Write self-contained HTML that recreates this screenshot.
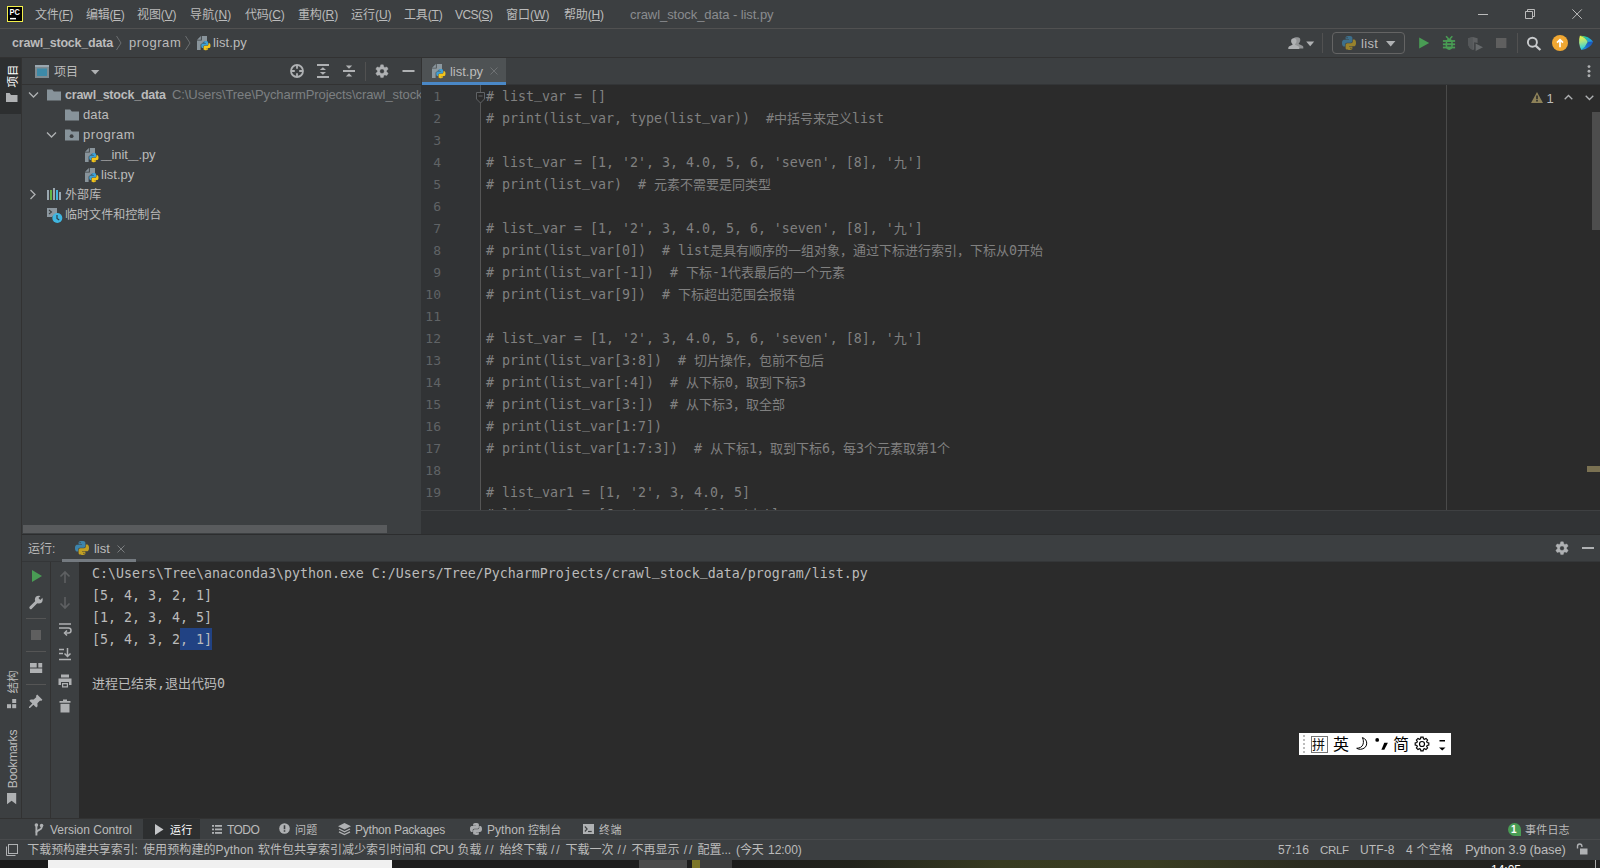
<!DOCTYPE html>
<html lang="zh-CN">
<head>
<meta charset="utf-8">
<title>crawl_stock_data - list.py</title>
<style>
html,body{margin:0;padding:0;}
body{width:1600px;height:868px;overflow:hidden;background:#3c3f41;position:relative;
 font-family:"Liberation Sans","Noto Sans CJK SC",sans-serif;font-size:12px;color:#bbbbbb;}
.a{position:absolute;}
.t{position:absolute;white-space:nowrap;line-height:20px;height:20px;}
.mono{font-family:"DejaVu Sans Mono","Liberation Mono","Noto Sans CJK SC",monospace;font-size:13.29px;}
svg{position:absolute;overflow:visible;}
.hl{position:absolute;height:1px;}
.vl{position:absolute;width:1px;}
u{text-decoration:underline;text-underline-offset:1px;}
/* editor */
#ed{left:422px;top:85px;width:1178px;height:425px;background:#2b2b2b;overflow:hidden;}
#gut{left:0;top:0;width:59px;height:425px;background:#313335;}
.ln{margin-top:1px;position:absolute;left:-1px;width:20px;text-align:right;color:#606366;height:22px;line-height:22px;font-size:13px;}
.cl{margin-top:1px;position:absolute;left:64px;color:#808080;height:22px;line-height:22px;white-space:pre;}
.cj{font-size:13px;}
.u_{position:relative;top:-3px;}
.L{font-size:13px;}
.bt{font-size:11px;}
.bt.L{font-size:12px;}
/*FIT*/
#m1{letter-spacing:-0.269px;}
#m2{letter-spacing:-0.303px;}
#m3{letter-spacing:-0.103px;}
#m4{letter-spacing:0.166px;}
#m5{letter-spacing:-0.234px;}
#m6{letter-spacing:-0.134px;}
#m7{letter-spacing:-0.034px;}
#m8{letter-spacing:-0.169px;}
#m9{letter-spacing:-0.531px;}
#m10{letter-spacing:0.034px;}
#m11{letter-spacing:-0.174px;}
#wt{letter-spacing:-0.067px;}
#n1{letter-spacing:-0.202px;}
#n2{letter-spacing:0.554px;}
#n3{letter-spacing:0.081px;}
#t1{letter-spacing:-0.215px;}
#t2{letter-spacing:0.122px;}
#t3{letter-spacing:0.540px;}
#t5{letter-spacing:0.024px;}
#t6{letter-spacing:0.095px;}
#t7{letter-spacing:0.061px;}
#tab1{letter-spacing:-0.019px;}
#r0{letter-spacing:0.052px;}
#r1{letter-spacing:-0.023px;}
#rc{letter-spacing:0.327px;}
#b1{letter-spacing:-0.016px;}
#b2{letter-spacing:0.250px;}
#b3{letter-spacing:-0.563px;}
#b4{letter-spacing:0.200px;}
#b5{letter-spacing:-0.227px;}
#b6{letter-spacing:0.050px;}
#b7{letter-spacing:0.400px;}
#b8{letter-spacing:0.200px;}
#sa{letter-spacing:-0.084px;}
#sb{letter-spacing:0.094px;}
#sc{letter-spacing:-0.001px;}
#sd{letter-spacing:-0.681px;}
#sf1{letter-spacing:1.914px;}
#sf2{letter-spacing:1.914px;}
#sf3{letter-spacing:1.914px;}
#sf4{letter-spacing:1.914px;}
#sm{letter-spacing:-0.103px;}
#sn{letter-spacing:-0.067px;}
#so{letter-spacing:-0.039px;}
#s1{letter-spacing:0.194px;}
#s2{letter-spacing:-0.308px;}
#s3{letter-spacing:0.120px;}
#s4{letter-spacing:0.237px;}
#s5{letter-spacing:-0.107px;}
/*ENDFIT*/
/* console */
#con{left:79px;top:562px;width:1521px;height:256px;background:#2b2b2b;overflow:hidden;}
.ol{margin-top:1px;position:absolute;left:13px;color:#bbbbbb;height:22px;line-height:22px;white-space:pre;}
</style>
</head>
<body>
<svg width="0" height="0" style="left:0;top:0"><defs>
<g id="pylogo"><path d="M4.95 0C2.4 0 2.6 1.1 2.6 1.1V2.25H5V2.6H1.65S0 2.4 0 5c0 2.6 1.42 2.5 1.42 2.5h.85V6.3s-.05-1.42 1.4-1.42h2.4s1.35.02 1.35-1.3V1.38S7.63 0 4.95 0zM3.62.77a.43.43 0 1 1 0 .87.43.43 0 0 1 0-.87z" fill="#3e9fd4"/><path d="M5.05 10c2.55 0 2.35-1.1 2.35-1.1V7.75H5V7.4h3.35S10 7.6 10 5c0-2.6-1.42-2.5-1.42-2.5h-.85v1.2s.05 1.42-1.4 1.42h-2.4s-1.35-.02-1.35 1.3v2.2S2.37 10 5.05 10zm1.33-.77a.43.43 0 1 1 0-.87.43.43 0 0 1 0 .87z" fill="#f4c51a"/></g>
<g id="pyfile"><path d="M5.800 1H11v5.600H8.200L4.600 9.400V15H1V5.600H5.800z" fill="#9aa7b0" fill-opacity=".82"/><path d="M4.900 1.100V4.700H1.100z" fill="#9aa7b0" fill-opacity=".82"/><g transform="translate(5.200,6) scale(.93)"><use href="#pylogo"/></g></g>
<g id="folder"><path d="M1 2.5h5.2l1.6 2H15V13.5H1z" fill="#87939a"/></g>
<g id="chevd"><path d="M1 1.5L5.5 6L10 1.5" fill="none" stroke="#afb1b3" stroke-width="1.3"/></g>
<g id="chevr"><path d="M1.5 1L6 5.5L1.5 10" fill="none" stroke="#afb1b3" stroke-width="1.3"/></g>
<g id="gear"><path fill="#afb1b3" fill-rule="evenodd" stroke="#afb1b3" stroke-width=".4" stroke-linejoin="round" d="M8.87 3.00L8.24 0.82L5.76 0.82L5.13 3.00L4.30 3.48L2.09 2.94L0.85 5.08L2.43 6.72L2.43 7.68L0.85 9.32L2.09 11.46L4.30 10.92L5.13 11.40L5.76 13.58L8.24 13.58L8.87 11.40L9.70 10.92L11.91 11.46L13.15 9.32L11.57 7.68L11.57 6.72L13.15 5.08L11.91 2.94L9.70 3.48zM4.70 7.20a2.30 2.30 0 1 0 4.60 0a2.30 2.30 0 1 0 -4.60 0z"/></g>
</defs></svg>
<!-- TITLEBAR -->
<div class="a" id="tb" style="left:0;top:0;width:1600px;height:28px;background:#3c3f41;"></div>
<div class="hl" style="left:0;top:28px;width:1600px;background:#515151;"></div>
<svg style="left:7px;top:6px" width="16" height="16" viewBox="0 0 16 16"><rect x="0" y="0" width="16" height="16" fill="#f3f04a"/><rect x="1" y="1" width="14" height="14" fill="#000"/><text x="2.6" y="8.8" font-family="Liberation Sans,sans-serif" font-weight="bold" font-size="8.2" fill="#fff" textLength="10.4" lengthAdjust="spacingAndGlyphs">PC</text><rect x="3" y="11.9" width="6" height="1.5" fill="#fff"/></svg>
<div class="t m" id="m1" style="left:35px;top:5px;">文件(<u>F</u>)</div>
<div class="t m" id="m2" style="left:86px;top:5px;">编辑(<u>E</u>)</div>
<div class="t m" id="m3" style="left:137px;top:5px;">视图(<u>V</u>)</div>
<div class="t m" id="m4" style="left:190px;top:5px;">导航(<u>N</u>)</div>
<div class="t m" id="m5" style="left:245px;top:5px;">代码(<u>C</u>)</div>
<div class="t m" id="m6" style="left:298px;top:5px;">重构(<u>R</u>)</div>
<div class="t m" id="m7" style="left:351px;top:5px;">运行(<u>U</u>)</div>
<div class="t m" id="m8" style="left:404px;top:5px;">工具(<u>T</u>)</div>
<div class="t m" id="m9" style="left:455px;top:5px;">VCS(<u>S</u>)</div>
<div class="t m" id="m10" style="left:506px;top:5px;">窗口(<u>W</u>)</div>
<div class="t m" id="m11" style="left:564px;top:5px;">帮助(<u>H</u>)</div>
<div class="t L" id="wt" style="left:630px;top:5px;color:#8a8c8f;">crawl_stock_data - list.py</div>
<svg style="left:1470px;top:6px" width="124" height="18" viewBox="0 0 124 18"><g fill="none" stroke="#bbbbbb" stroke-width="1"><path d="M8 8.5H18"/><path d="M55.500 5.500h7v7h-7z"/><path d="M57.500 5.500v-2h7v7h-2"/><path d="M102.400 3.400l9.400 9.400M111.800 3.400l-9.400 9.400"/></g></svg>
<!-- NAVBAR -->
<div class="hl" style="left:0;top:57px;width:1600px;background:#323232;"></div>
<div class="t" id="n1" style="font-size:12.5px;left:12px;top:33px;font-weight:bold;">crawl_stock_data</div>
<svg style="left:115px;top:35px" width="8" height="16" viewBox="0 0 8 16"><path d="M1.5 1L6 8L1.5 15" fill="none" stroke="#6b6e70" stroke-width="1"/></svg>
<div class="t L" id="n2" style="left:129px;top:33px;">program</div>
<svg style="left:184px;top:35px" width="8" height="16" viewBox="0 0 8 16"><path d="M1.5 1L6 8L1.5 15" fill="none" stroke="#6b6e70" stroke-width="1"/></svg>
<svg class="pyf" style="left:196px;top:35px" width="16" height="16" viewBox="0 0 16 16"><use href="#pyfile"/></svg>
<div class="t L" id="n3" style="left:213px;top:33px;">list.py</div>
<!-- TOOLBAR -->
<svg style="left:1288px;top:36px" width="28" height="14" viewBox="0 0 28 14"><g fill="#afb1b3"><path d="M9.500 1.200a2.800 2.800 0 0 1 2.800 2.800c0 1.300-.7 2.600-1.500 3.200v.9l3.600 1.600c.6.300.9.800.9 1.400v1.400H6.500l.0-2c0-.9-.5-1.700-1.300-2.100L4.600 8.100l1.800-.8V6.800C5.700 6.200 5.200 5.200 5.200 4A2.800 2.800 0 0 1 8 1.200z" opacity=".75"/><path d="M5.800 2.200a2.700 2.700 0 0 1 2.700 2.700c0 1.300-.6 2.400-1.400 3v.9l3.200 1.500c.6.300 1 .9 1 1.500V13H.3v-1.200c0-.6.400-1.200 1-1.500l3.200-1.500v-.9c-.8-.6-1.400-1.700-1.400-3a2.700 2.700 0 0 1 2.700-2.700z"/><path d="M18.200 5.600h8l-4 4.600z"/></g></svg>
<div class="vl" style="left:1322px;top:33px;height:20px;background:#515151;"></div>
<div class="a" style="left:1332px;top:32px;width:71px;height:20px;border:1px solid #646464;border-radius:4px;box-sizing:content-box;"></div>
<svg style="left:1342px;top:36px;opacity:.5" width="14" height="14" viewBox="0 0 10 10"><use href="#pylogo"/></svg>
<div class="t L" id="rc" style="left:1361px;top:34px;">list</div>
<svg style="left:1386px;top:41px" width="10" height="6" viewBox="0 0 10 6"><path d="M0 0h9.400L4.700 5.400z" fill="#afb1b3"/></svg>
<svg style="left:1416px;top:35px" width="16" height="16" viewBox="0 0 16 16"><path d="M3.200 2.400L13.200 8L3.200 13.600z" fill="#499c54"/></svg>
<svg style="left:1441px;top:35px" width="16" height="16" viewBox="0 0 16 16"><g fill="#499c54"><path d="M4.600 8.200c0-3 1.500-4.500 3.600-4.500s3.600 1.500 3.600 4.500v2.300c0 2.900-1.500 4.400-3.600 4.400s-3.600-1.500-3.600-4.400z"/><path d="M4.500 1.700l1.100-1 2.600 2.700-1.100 1zM11.900 1.700l-1.100-1-2.600 2.700 1.100 1z"/><rect x="1.900" y="5.100" width="12.200" height="1.800"/><rect x="1.900" y="8.400" width="12.200" height="1.800"/><rect x="1.900" y="11.600" width="12.200" height="1.800"/></g><rect x="6.200" y="7" width="4" height="1.250" fill="#3c3f41"/><rect x="6.200" y="10.200" width="4" height="1.250" fill="#3c3f41"/></svg>
<svg style="left:1467px;top:36px" width="17" height="16" viewBox="0 0 17 16"><path d="M1 2.200L5.800 1l4.800 1.200V7L7.200 6.200v7.400L5.800 14C2.800 12.700 1 10.200 1 7z" fill="#5e6062"/><path d="M5.800 1v13C2.800 12.700 1 10.200 1 7V2.200z" fill="#55585a"/><path d="M8.600 7.400L16 11.200L8.600 15z" fill="#66696b"/></svg>
<svg style="left:1496px;top:38px" width="10" height="10" viewBox="0 0 10 10"><rect width="10.400" height="10" fill="#5f5f5f"/></svg>
<div class="vl" style="left:1517px;top:33px;height:20px;background:#515151;"></div>
<svg style="left:1526px;top:36px" width="16" height="15" viewBox="0 0 16 15"><circle cx="6.400" cy="6.200" r="4.500" fill="none" stroke="#c9cbcd" stroke-width="1.900"/><path d="M9.600 9.600L14.400 14" stroke="#c9cbcd" stroke-width="2.300"/></svg>
<svg style="left:1552px;top:35px" width="16" height="16" viewBox="0 0 16 16"><circle cx="8" cy="8" r="8" fill="#f0a732"/><path d="M8 12.200V5M5 7.600L8 4.600L11 7.600" fill="none" stroke="#fff" stroke-width="1.700"/></svg>
<svg style="left:1578px;top:35px" width="16" height="16" viewBox="0 0 16 16"><defs><linearGradient id="lgA" x1="0" y1="0" x2="0.150" y2="1"><stop offset="0" stop-color="#f7f53a"/><stop offset=".45" stop-color="#a9e684"/><stop offset="1" stop-color="#22cde6"/></linearGradient><linearGradient id="lgB" x1="0" y1="0" x2="1" y2=".5"><stop offset="0" stop-color="#7be84a"/><stop offset=".45" stop-color="#25c9a0"/><stop offset="1" stop-color="#1c97ee"/></linearGradient><linearGradient id="lgC" x1="1" y1="0" x2="0" y2="1"><stop offset="0" stop-color="#1b53b6"/><stop offset=".55" stop-color="#1a6fd0"/><stop offset="1" stop-color="#1da6ea"/></linearGradient></defs><path d="M1.900 .7Q10.500 .3 15.200 6.800L9.700 7Q8 2.500 1.900 .7z" fill="url(#lgB)"/><path d="M9.700 7L15.200 6.800Q12.300 13.600 3.400 15Q7.600 12 9.700 7z" fill="url(#lgC)"/><path d="M1.900 .7Q8 2.500 9.700 7Q7.600 12 3.400 15Q-.4 8 1.900 .7z" fill="url(#lgA)"/></svg>
<!-- LEFTSTRIP -->
<div class="a" style="left:0;top:58px;width:21px;height:56px;background:#2d2f30;"></div>
<div class="vl" style="left:21px;top:58px;height:760px;background:#323232;"></div>
<div class="t" id="ls1" style="font-size:11.5px;left:0.5px;top:69px;width:24px;height:14px;line-height:14px;transform:rotate(-90deg);transform-origin:center;color:#fff;text-align:center;">项目</div>
<svg style="left:6px;top:92px" width="12" height="11" viewBox="0 0 12 11"><path d="M0 1h3.6l1.4 2H11.5V10H0z" fill="#afb1b3"/></svg>
<div class="t" id="ls2" style="font-size:11.5px;left:-2.5px;top:675px;width:30px;height:14px;line-height:14px;transform:rotate(-90deg);transform-origin:center;text-align:center;">结构</div>
<svg style="left:7px;top:699px" width="10" height="10" viewBox="0 0 10 10"><g fill="#afb1b3"><rect x="5.2" y="0" width="4" height="4"/><rect x="0" y="5.2" width="4" height="4"/><rect x="5.2" y="5.2" width="4" height="4"/></g></svg>
<div class="t" id="ls3" style="font-size:12px;letter-spacing:-0.15px;left:-17.2px;top:751.5px;width:60px;height:14px;line-height:14px;transform:rotate(-90deg);transform-origin:center;text-align:center;">Bookmarks</div>
<svg style="left:7px;top:793px" width="10" height="12" viewBox="0 0 10 12"><path d="M0 0h9.200v11.300L4.600 7.800L0 11.300z" fill="#afb1b3"/></svg>
<!-- PROJECT -->
<div class="hl" style="left:22px;top:84px;width:400px;background:#323232;"></div>
<svg style="left:35px;top:65px" width="14" height="13" viewBox="0 0 14 13"><rect x="0" y="0" width="14" height="13" fill="#7f8b91"/><rect x="0" y="0" width="14" height="2" fill="#9aa7b0"/><rect x="2" y="3.5" width="10" height="7.5" fill="#3d8aa8"/></svg>
<div class="t" id="ph" style="left:54px;top:62px;">项目</div>
<svg style="left:91px;top:70px" width="9" height="5" viewBox="0 0 9 5"><path d="M0 0h8.4L4.2 4.6z" fill="#afb1b3"/></svg>
<svg style="left:290px;top:64px" width="14" height="14" viewBox="0 0 14 14"><g fill="none" stroke="#afb1b3" stroke-width="1.800"><circle cx="7" cy="7" r="6"/><path d="M7 1v3.800M7 9.200v3.800M1 7h3.800M9.200 7h3.800"/></g></svg>
<svg style="left:316px;top:64px" width="14" height="14" viewBox="0 0 14 14"><g fill="#afb1b3"><rect x="1" y="0" width="12" height="2"/><rect x="1" y="12" width="12" height="2"/><path d="M6.900 3.300L10 5.900H3.800z"/><path d="M6.900 10.700L10 8.100H3.800z"/></g></svg>
<svg style="left:342px;top:64px" width="14" height="14" viewBox="0 0 14 14"><g fill="#afb1b3"><rect x="1" y="6" width="12" height="2"/><path d="M7 4.800L10.200 1.400H3.800z"/><path d="M7 9.200L10.200 12.600H3.800z"/></g></svg>
<div class="vl" style="left:365px;top:62px;height:19px;background:#515151;"></div>
<svg style="left:375px;top:64px" width="14" height="15" viewBox="0 0 14 15"><use href="#gear"/></svg>
<svg style="left:401.500px;top:70px" width="13" height="2" viewBox="0 0 13 2"><rect x="0.5" y="0" width="12" height="2" fill="#afb1b3"/></svg>
<div class="a" id="tree" style="left:22px;top:85px;width:399px;height:440px;overflow:hidden;">
<svg style="left:6px;top:6px" width="11" height="8" viewBox="0 0 11 8"><use href="#chevd"/></svg>
<svg style="left:24px;top:2px" width="16" height="16" viewBox="0 0 16 16"><use href="#folder"/></svg>
<div class="t" id="t1" style="font-size:12.5px;left:43px;top:0;font-weight:bold;">crawl_stock_data</div>
<div class="t L" id="t1p" style="letter-spacing:-0.08px;left:150px;top:0;color:#7d8082;">C:\Users\Tree\PycharmProjects\crawl_stock_data</div>
<svg style="left:42px;top:22px" width="16" height="16" viewBox="0 0 16 16"><use href="#folder"/></svg>
<div class="t L" id="t2" style="left:61px;top:20px;">data</div>
<svg style="left:24px;top:46px" width="11" height="8" viewBox="0 0 11 8"><use href="#chevd"/></svg>
<svg style="left:42px;top:42px" width="16" height="16" viewBox="0 0 16 16"><use href="#folder"/><circle cx="7.6" cy="9.2" r="1.9" fill="#3c3f41"/></svg>
<div class="t L" id="t3" style="left:61px;top:40px;">program</div>
<svg style="left:62px;top:62px" width="16" height="16" viewBox="0 0 16 16"><use href="#pyfile"/></svg>
<div class="t L" id="t4" style="letter-spacing:-0.1px;left:79px;top:60px;"><span style="font-size:9.7px">__</span>init<span style="font-size:9.7px">__</span>.py</div>
<svg style="left:62px;top:82px" width="16" height="16" viewBox="0 0 16 16"><use href="#pyfile"/></svg>
<div class="t L" id="t5" style="left:79px;top:80px;">list.py</div>
<svg style="left:7px;top:104px" width="8" height="11" viewBox="0 0 8 11"><use href="#chevr"/></svg>
<svg style="left:25px;top:103px" width="15" height="13" viewBox="0 0 15 13"><rect x="0" y="2" width="2" height="10" fill="#9aa7b0"/><rect x="3" y="2" width="2" height="10" fill="#62b543"/><rect x="6" y="0" width="2" height="12" fill="#9aa7b0"/><rect x="9" y="2" width="2" height="10" fill="#40b6e0"/><rect x="12" y="4" width="2" height="8" fill="#9aa7b0"/></svg>
<div class="t" id="t6" style="left:43px;top:100px;">外部库</div>
<svg style="left:25px;top:122px" width="16" height="16" viewBox="0 0 16 16"><path d="M0 1h10v6.2A5.2 5.2 0 0 0 5 10H0z" fill="#9aa7b0" fill-opacity=".85"/><path d="M2 3l2.5 2L2 7" fill="none" stroke="#3c3f41" stroke-width="1.1"/><circle cx="10.3" cy="11" r="5" fill="#40b6e0"/><path d="M10 8v3.4l2.2 1.6" fill="none" stroke="#2b3d47" stroke-width="1.2"/></svg>
<div class="t" id="t7" style="left:43px;top:120px;">临时文件和控制台</div>
</div>
<div class="a" style="left:23px;top:525px;width:364px;height:8px;background:#595b5d;"></div>
<div class="hl" style="left:22px;top:534px;width:1578px;background:#2c2d2e;"></div>
<div class="vl" style="left:421px;top:58px;height:27px;background:#323232;"></div><div class="vl" style="left:421px;top:85px;height:449px;background:#313335;"></div>
<!-- EDITOR -->
<div class="hl" style="left:422px;top:84px;width:1178px;background:#333537;"></div>
<div class="a" style="left:422px;top:58px;width:84px;height:27px;background:#4e5254;"></div>
<div class="a" style="left:422px;top:82px;width:84px;height:3px;background:#4a88c7;"></div>
<svg style="left:431px;top:63px" width="16" height="16" viewBox="0 0 16 16"><use href="#pyfile"/></svg>
<div class="t L" id="tab1" style="left:450px;top:62px;">list.py</div>
<svg style="left:490px;top:67px" width="8" height="8" viewBox="0 0 8 8"><path d="M.5 .5l7 7M7.5 .5l-7 7" fill="none" stroke="#6e7173" stroke-width="1"/></svg>
<svg style="left:1587px;top:65px" width="4" height="14" viewBox="0 0 4 14"><g fill="#afb1b3"><circle cx="2" cy="1.600" r="1.450"/><circle cx="2" cy="6.200" r="1.450"/><circle cx="2" cy="10.800" r="1.450"/></g></svg>
<div class="a" id="ed">
<div class="a" id="gut"></div>
<div class="vl" style="left:58px;top:0;height:425px;background:#555555;"></div>
<div class="vl" style="left:1024px;top:0;height:425px;background:#4a4a4a;"></div>
<svg style="left:54px;top:7px" width="9" height="12" viewBox="0 0 9 12"><path d="M.5 .5h8v6.500l-4 4l-4-4z" fill="#2b2b2b" stroke="#606366" stroke-width="1"/><path d="M2.500 4h4" stroke="#606366" stroke-width="1"/></svg>
<div class="ln mono" style="top:0px">1</div><div class="cl mono" style="top:0px"># list<span class="u_">_</span>var = []</div>
<div class="ln mono" style="top:22px">2</div><div class="cl mono" style="top:22px"># print(list<span class="u_">_</span>var, type(list<span class="u_">_</span>var))  #<span class="cj">中括号来定义</span>list</div>
<div class="ln mono" style="top:44px">3</div>
<div class="ln mono" style="top:66px">4</div><div class="cl mono" style="top:66px"># list<span class="u_">_</span>var = [1, '2', 3, 4.0, 5, 6, 'seven', [8], '<span class="cj">九</span>']</div>
<div class="ln mono" style="top:88px">5</div><div class="cl mono" style="top:88px"># print(list<span class="u_">_</span>var)  # <span class="cj">元素不需要是同类型</span></div>
<div class="ln mono" style="top:110px">6</div>
<div class="ln mono" style="top:132px">7</div><div class="cl mono" style="top:132px"># list<span class="u_">_</span>var = [1, '2', 3, 4.0, 5, 6, 'seven', [8], '<span class="cj">九</span>']</div>
<div class="ln mono" style="top:154px">8</div><div class="cl mono" style="top:154px"># print(list<span class="u_">_</span>var[0])  # list<span class="cj">是具有顺序的一组对象，通过下标进行索引，下标从</span>0<span class="cj">开始</span></div>
<div class="ln mono" style="top:176px">9</div><div class="cl mono" style="top:176px"># print(list<span class="u_">_</span>var[-1])  # <span class="cj">下标</span>-1<span class="cj">代表最后的一个元素</span></div>
<div class="ln mono" style="top:198px">10</div><div class="cl mono" style="top:198px"># print(list<span class="u_">_</span>var[9])  # <span class="cj">下标超出范围会报错</span></div>
<div class="ln mono" style="top:220px">11</div>
<div class="ln mono" style="top:242px">12</div><div class="cl mono" style="top:242px"># list<span class="u_">_</span>var = [1, '2', 3, 4.0, 5, 6, 'seven', [8], '<span class="cj">九</span>']</div>
<div class="ln mono" style="top:264px">13</div><div class="cl mono" style="top:264px"># print(list<span class="u_">_</span>var[3:8])  # <span class="cj">切片操作，包前不包后</span></div>
<div class="ln mono" style="top:286px">14</div><div class="cl mono" style="top:286px"># print(list<span class="u_">_</span>var[:4])  # <span class="cj">从下标</span>0<span class="cj">，取到下标</span>3</div>
<div class="ln mono" style="top:308px">15</div><div class="cl mono" style="top:308px"># print(list<span class="u_">_</span>var[3:])  # <span class="cj">从下标</span>3<span class="cj">，取全部</span></div>
<div class="ln mono" style="top:330px">16</div><div class="cl mono" style="top:330px"># print(list<span class="u_">_</span>var[1:7])</div>
<div class="ln mono" style="top:352px">17</div><div class="cl mono" style="top:352px"># print(list<span class="u_">_</span>var[1:7:3])  # <span class="cj">从下标</span>1<span class="cj">，取到下标</span>6<span class="cj">，每</span>3<span class="cj">个元素取第</span>1<span class="cj">个</span></div>
<div class="ln mono" style="top:374px">18</div>
<div class="ln mono" style="top:396px">19</div><div class="cl mono" style="top:396px"># list<span class="u_">_</span>var1 = [1, '2', 3, 4.0, 5]</div>
<div class="ln mono" style="top:418px">20</div><div class="cl mono" style="top:418px"># list<span class="u_">_</span>var2 = [6, 'seven', [8], '<span class="cj">九</span>']</div>
<div class="a" style="left:1170px;top:27px;width:8px;height:118px;background:#4d4d4d;"></div>
<div class="a" style="left:1165px;top:381px;width:13px;height:6px;background:#7a7152;"></div>
<svg style="left:1109px;top:7px" width="12" height="11" viewBox="0 0 12 11"><path d="M6 0L12 11H0z" fill="#8d8158"/><path d="M5.2 3.6h1.6v3.6H5.2zM5.2 8.1h1.6v1.5H5.2z" fill="#2b2b2b"/></svg>
<div class="t L" id="wn" style="left:1124.500px;top:4px;">1</div>
<svg style="left:1142px;top:9px" width="9" height="6" viewBox="0 0 9 6"><path d="M.7 5.3L4.5 1.5L8.3 5.3" fill="none" stroke="#afb1b3" stroke-width="1.3"/></svg>
<svg style="left:1163px;top:10px" width="9" height="6" viewBox="0 0 9 6"><path d="M.7 .7L4.5 4.5L8.3 .7" fill="none" stroke="#afb1b3" stroke-width="1.3"/></svg>
</div>
<div class="a" style="left:422px;top:510px;width:1178px;height:24px;background:#313335;"></div>
<div class="hl" style="left:421px;top:510px;width:1179px;background:#3e4042;"></div>
<!-- RUN -->
<div class="t" id="r0" style="left:28px;top:539px;">运行:</div>
<svg style="left:75px;top:541px;opacity:.72" width="14" height="14" viewBox="0 0 10 10"><use href="#pylogo"/></svg>
<div class="t L" id="r1" style="left:94px;top:539px;">list</div>
<svg style="left:117px;top:545px" width="8" height="8" viewBox="0 0 8 8"><path d="M.5 .5l7 7M7.5 .5l-7 7" fill="none" stroke="#7a7d7f" stroke-width="1"/></svg>
<div class="a" style="left:62px;top:559px;width:74px;height:3px;background:#747a80;z-index:3;"></div>
<svg style="left:1555px;top:541px" width="14" height="15" viewBox="0 0 14 15"><use href="#gear"/></svg>
<svg style="left:1582px;top:547px" width="13" height="2" viewBox="0 0 13 2"><rect x="0" y="0" width="12" height="2" fill="#afb1b3"/></svg>
<div class="hl" style="left:22px;top:561px;width:1578px;background:#343638;"></div>
<div class="vl" style="left:50px;top:562px;height:256px;background:#323232;"></div>
<!-- run toolbar col 1 -->
<svg style="left:28px;top:568px" width="16" height="16" viewBox="0 0 16 16"><path d="M4 2L14 8L4 14z" fill="#499c54"/></svg>
<svg style="left:28px;top:594px" width="16" height="16" viewBox="0 0 16 16"><path d="M2.800 13.600L9.200 7.200" stroke="#afb1b3" stroke-width="2.900" stroke-linecap="round" fill="none"/><circle cx="10.800" cy="5.600" r="3.900" fill="#afb1b3"/><rect x="9.500" y="-1.400" width="2.600" height="6.200" transform="rotate(45 10.800 5.600)" fill="#3c3f41"/></svg>
<div class="hl" style="left:26px;top:618px;width:20px;background:#555555;"></div>
<svg style="left:31px;top:630px" width="10" height="10" viewBox="0 0 10 10"><rect width="10" height="10" fill="#5f5f5f"/></svg>
<div class="hl" style="left:26px;top:651px;width:20px;background:#555555;"></div>
<svg style="left:30px;top:663px" width="12" height="10" viewBox="0 0 12 10"><g fill="#afb1b3"><rect x="0" y="0" width="6.700" height="4.500"/><rect x="8.300" y="0" width="3.900" height="4.500"/><rect x="0" y="5.500" width="12.200" height="4.500"/></g></svg>
<div class="hl" style="left:26px;top:684px;width:20px;background:#555555;"></div>
<svg style="left:28px;top:693px" width="16" height="16" viewBox="0 0 16 16"><path d="M9.2 1.6l5.200 5.200-1.300 1.300-1-.5-2.700 2.700.2 3-1.300 1.300-2.900-2.900L2 15.100l-.9-.2-.2-.9L4.300 10.600 1.400 7.700l1.300-1.300 3 .2L8.400 3.900l-.5-1z" fill="#afb1b3"/></svg>
<!-- run toolbar col 2 -->
<svg style="left:57px;top:569px" width="16" height="16" viewBox="0 0 16 16"><path d="M8 14V3M3.500 7.500L8 3l4.500 4.500" fill="none" stroke="#5e6062" stroke-width="1.6"/></svg>
<svg style="left:57px;top:595px" width="16" height="16" viewBox="0 0 16 16"><path d="M8 2v11M3.500 8.500L8 13l4.500-4.500" fill="none" stroke="#5e6062" stroke-width="1.600"/></svg>
<svg style="left:57px;top:621px" width="16" height="16" viewBox="0 0 16 16"><g fill="none" stroke="#afb1b3" stroke-width="1.5"><path d="M2 3h12"/><path d="M2 7h9.500a2.500 2.500 0 0 1 0 5H8"/><path d="M10 9.500L7.500 12l2.500 2.500"/></g></svg>
<svg style="left:57px;top:646px" width="16" height="16" viewBox="0 0 16 16"><g fill="none" stroke="#afb1b3" stroke-width="1.500"><path d="M2 3.500h5M2 7.500h4M2 13.500h12"/><path d="M10.500 2v8M7.500 7.500l3 3l3-3"/></g></svg>
<svg style="left:57px;top:673px" width="16" height="16" viewBox="0 0 16 16"><g fill="#afb1b3"><rect x="4" y="1.500" width="8" height="3"/><path d="M1.500 5.500h13v6.500h-2.500v-3h-8v3h-2.500z"/><path d="M5 10h6v4.500h-6z M6.200 11.200v2.100h3.600v-2.100z" fill-rule="evenodd"/></g></svg>
<svg style="left:57px;top:698px" width="16" height="16" viewBox="0 0 16 16"><g fill="#afb1b3"><path d="M6 1.500h4v1.500h3.500v1.800h-11v-1.800h3.500z"/><path d="M3.500 5.800h9v8.700h-9z"/></g></svg>
<!-- console -->
<div class="a" id="con">
<div class="a" style="left:101px;top:66px;width:32px;height:22px;background:#214283;"></div>
<div class="ol mono" style="top:0">C:\Users\Tree\anaconda3\python.exe C:/Users/Tree/PycharmProjects/crawl<span class="u_">_</span>stock<span class="u_">_</span>data/program/list.py</div>
<div class="ol mono" style="top:22px">[5, 4, 3, 2, 1]</div>
<div class="ol mono" style="top:44px">[1, 2, 3, 4, 5]</div>
<div class="ol mono" style="top:66px">[5, 4, 3, 2, 1]</div>
<div class="ol mono" style="top:110px"><span class="cj">进程已结束</span>,<span class="cj">退出代码</span>0</div>
</div>
<!-- BOTTOM -->
<div class="hl" style="left:0;top:818px;width:1600px;background:#323232;"></div>
<div class="a" style="left:143px;top:819px;width:57px;height:20px;background:#2d2f30;"></div>
<div class="hl" style="left:0;top:839px;width:1600px;background:#484a4c;"></div>
<svg style="left:34px;top:823px" width="10" height="13" viewBox="0 0 10 13"><g fill="none" stroke="#afb1b3" stroke-width="1.900"><path d="M2.400 1v11.500"/><path d="M7.600 3v1.800c0 2.200-5.200 1.800-5.200 4.700"/></g><circle cx="2.400" cy="2" r="1.800" fill="#afb1b3"/><circle cx="7.600" cy="2.600" r="1.800" fill="#afb1b3"/></svg>
<div class="t bt L" id="b1" style="left:50px;top:820px;">Version Control</div>
<svg style="left:155px;top:824px" width="9" height="11" viewBox="0 0 9 11"><path d="M0 0L8.500 5.500L0 11z" fill="#c4c6c8"/></svg>
<div class="t bt" id="b2" style="left:170px;top:820px;color:#fff;">运行</div>
<svg style="left:212px;top:825px" width="10" height="9" viewBox="0 0 10 9"><g fill="#afb1b3"><rect x="0" y="0" width="2" height="1.800"/><rect x="3" y="0" width="7" height="1.800"/><rect x="0" y="3.500" width="2" height="1.800"/><rect x="3" y="3.500" width="7" height="1.800"/><rect x="0" y="7" width="2" height="1.800"/><rect x="3" y="7" width="7" height="1.800"/></g></svg>
<div class="t bt L" id="b3" style="left:227px;top:820px;">TODO</div>
<svg style="left:279px;top:823px" width="11" height="11" viewBox="0 0 11 11"><circle cx="5.500" cy="5.500" r="5.300" fill="#afb1b3"/><path d="M4.700 2.300h1.600v4h-1.600zM4.700 7.200h1.600v1.600h-1.600z" fill="#3c3f41"/></svg>
<div class="t bt" id="b4" style="left:295px;top:820px;">问题</div>
<svg style="left:338px;top:823px" width="13" height="13" viewBox="0 0 13 13"><path d="M6.500 0L13 3.300L6.500 6.600L0 3.300z" fill="#afb1b3"/><path d="M1 6L6.500 8.800L12 6M1 8.800L6.500 11.600L12 8.800" fill="none" stroke="#afb1b3" stroke-width="1.300"/></svg>
<div class="t bt L" id="b5" style="left:355px;top:820px;">Python Packages</div>
<svg style="left:470px;top:823px" width="12" height="12" viewBox="0 0 10 10"><g opacity=".95"><path d="M4.950 0C2.400 0 2.600 1.100 2.600 1.100V2.250H5V2.600H1.650S0 2.400 0 5c0 2.600 1.420 2.500 1.420 2.500h.85V6.300s-.05-1.420 1.400-1.420h2.400s1.350.02 1.350-1.300V1.380S7.630 0 4.950 0z" fill="#afb1b3"/><path d="M5.050 10c2.550 0 2.350-1.100 2.350-1.100V7.750H5V7.400h3.350S10 7.600 10 5c0-2.600-1.420-2.500-1.420-2.500h-.85v1.200s.05 1.420-1.400 1.420h-2.400s-1.350-.02-1.350 1.300v2.200S2.370 10 5.050 10z" fill="#afb1b3"/></g></svg>
<div class="t bt" id="b6" style="left:487px;top:820px;"><span style="font-size:12px">Python </span>控制台</div>
<svg style="left:583px;top:824px" width="11" height="10" viewBox="0 0 12 10" preserveAspectRatio="none"><rect width="12" height="10" fill="#afb1b3"/><path d="M2 2.500L4.500 5L2 7.500" fill="none" stroke="#3c3f41" stroke-width="1.200"/><path d="M5.500 7.500h4" stroke="#3c3f41" stroke-width="1.200"/></svg>
<div class="t bt" id="b7" style="left:599px;top:820px;">终端</div>
<svg style="left:1508px;top:823px" width="13" height="13" viewBox="0 0 13 13"><path d="M6.500 0a6.500 6.500 0 0 1 6.500 6.500V13H6.500a6.500 6.500 0 0 1 0-13z" fill="#499c54"/></svg>
<div class="t" id="evn" style="left:1511px;top:820px;color:#fff;font-size:10px;font-weight:bold;">1</div>
<div class="t bt" id="b8" style="left:1525px;top:820px;">事件日志</div>
<!-- status bar -->
<svg style="left:6px;top:843px" width="13" height="13" viewBox="0 0 13 13"><g fill="none" stroke="#afb1b3" stroke-width="1"><rect x="2.500" y="1.500" width="9" height="9"/><path d="M.5 3.500v9h9"/></g></svg>
<div class="a" id="s0" style="left:0;top:840px;width:820px;height:20px;"><span class="t" id="sa" style="left:27.300px;top:0;">下载预构建共享索引:</span><span class="t" id="sb" style="left:143px;top:0;">使用预构建的Python</span><span class="t" id="sc" style="left:258px;top:0;">软件包共享索引减少索引时间和</span><span class="t" id="sd" style="left:430px;top:0;">CPU</span><span class="t" id="se" style="left:457.5px;top:0;">负载</span><span class="t" id="sf1" style="left:485px;top:0;">//</span><span class="t" id="sg" style="left:499.5px;top:0;">始终下载</span><span class="t" id="sf2" style="left:551px;top:0;">//</span><span class="t" id="si" style="left:565.5px;top:0;">下载一次</span><span class="t" id="sf3" style="left:617.5px;top:0;">//</span><span class="t" id="sk" style="left:631.5px;top:0;">不再显示</span><span class="t" id="sf4" style="left:683.75px;top:0;">//</span><span class="t" id="sm" style="left:697.5px;top:0;">配置...</span><span class="t" id="sn" style="left:736px;top:0;">(今天</span><span class="t" id="so" style="left:768px;top:0;">12:00)</span></div>
<div class="t" id="s1" style="left:1278px;top:840px;">57:16</div>
<div class="t" id="s2" style="font-size:11.5px;left:1320px;top:840px;">CRLF</div>
<div class="t" id="s3" style="left:1360px;top:840px;">UTF-8</div>
<div class="t" id="s4" style="left:1406px;top:840px;">4 个空格</div>
<div class="t L" id="s5" style="left:1465px;top:840px;">Python 3.9 (base)</div>
<svg style="left:1576px;top:843px" width="12" height="12" viewBox="0 0 12 12"><path d="M1.500 5.500V3.200a2.200 2.200 0 0 1 4.400 0V4" fill="none" stroke="#afb1b3" stroke-width="1.400"/><rect x="4" y="5.500" width="7.500" height="6" fill="#afb1b3"/></svg>
<!-- desktop strip -->
<div class="a" id="desk" style="left:0;top:860px;width:1600px;height:8px;background:linear-gradient(90deg,#1b1b1b 0,#1b1b1b 48px,#f0f0f0 48px,#f0f0f0 392px,#1e1e1e 392px,#1e1e1e 639px,#4b4b4b 639px,#4b4b4b 687px,#1e1e1e 687px,#1e1e1e 692px,#7c7628 692px,#7c7628 700px,#3e3e3e 700px,#3e3e3e 732px,#1d1d1c 732px,#22231c 850px,#383b21 1000px,#3a3d22 1150px,#2c2d20 1300px,#232320 1500px,#222220 1595px,#aaa 1595px,#aaa 1596px,#222 1596px);overflow:hidden;">
<div class="t" style="left:1491px;top:3px;color:#fff;font-size:12px;line-height:14px;">14:05</div>
</div>
<!-- IME -->
<div class="a" id="ime" style="left:1299px;top:733px;width:152px;height:22px;background:#fff;color:#000;font-family:'Noto Sans CJK SC',sans-serif;">
<div class="vl" style="left:4px;top:2px;height:20px;width:2px;background:repeating-linear-gradient(180deg,#bdbdbd 0,#bdbdbd 2px,#fff 2px,#fff 4px);"></div>
<div class="a" style="left:12px;top:3px;width:15px;height:15px;border:1px solid #777;box-sizing:content-box;"></div>
<div class="t" style="left:13px;top:3px;font-size:13px;line-height:16px;height:16px;color:#111;">拼</div>
<div class="t" style="left:34px;top:-1px;font-size:16px;line-height:22px;height:22px;">英</div>
<svg style="left:57px;top:4px" width="12" height="13" viewBox="0 0 12 13"><path d="M6.400 .6c3 .9 4.600 3.500 4.300 6.300-.3 2.900-2.600 5.200-6.200 5.400-1.500 0-2.700-.3-3.800-1 3-.1 5.600-1.300 6.400-4.200.6-2.200.3-4.400-.7-6.500z" fill="none" stroke="#000" stroke-width="1"/></svg>
<svg style="left:76px;top:4px" width="14" height="14" viewBox="0 0 14 14"><circle cx="2.200" cy="2.900" r="1.900" fill="#000"/><path d="M9.300 5.800h3.600L9.300 12.800H6.400z" fill="#000"/></svg>
<div class="t" style="left:94px;top:-1px;font-size:16px;line-height:22px;height:22px;">简</div>
<svg style="left:115.500px;top:4px" width="14" height="14" viewBox="0 0 15 15"><g fill="none" stroke="#000" stroke-width="1.250"><path d="M6.300 .8h2.400l.4 1.800 1.100.5 1.600-1 1.700 1.700-1 1.600.5 1.100 1.800.4v2.400l-1.800.4-.5 1.100 1 1.600-1.700 1.700-1.600-1-1.100.5-.4 1.800H6.300l-.4-1.800-1.100-.5-1.600 1L1.500 12.400l1-1.600L2 9.700.2 9.300V6.900L2 6.500l.5-1.100-1-1.600L3.200 2.100l1.600 1 1.100-.5z" transform="translate(0,-.6)"/><circle cx="7.500" cy="7.500" r="2.700"/></g></svg>
<svg style="left:140px;top:7px" width="7" height="11" viewBox="0 0 7 11"><rect x=".5" y="0" width="5.500" height="1.500" fill="#000"/><path d="M0 7.500h6.500L3.250 10.500z" fill="#000"/></svg>
</div>
</body>
</html>
